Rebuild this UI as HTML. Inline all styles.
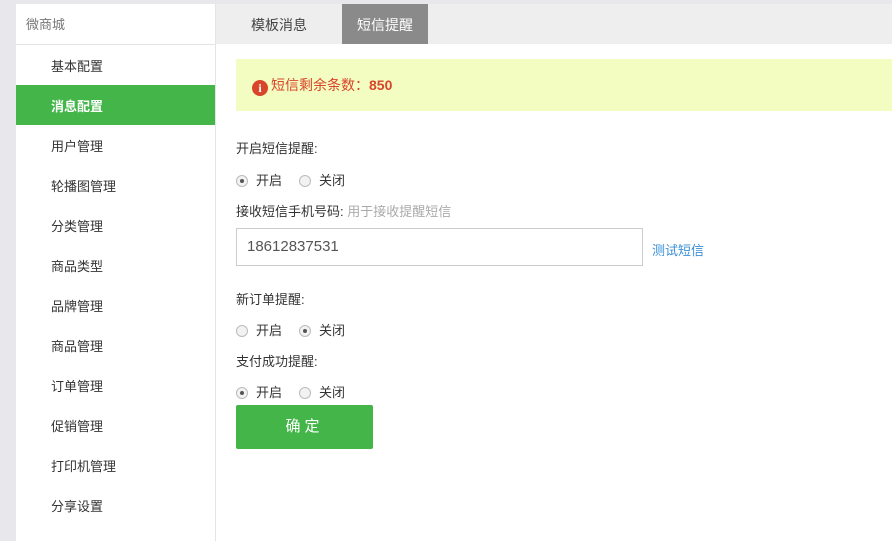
<!DOCTYPE html><html><head><meta charset="utf-8"><style>
body{margin:0;width:892px;height:541px;background:#e8e8ec;font-family:"Liberation Sans","Noto Sans CJK SC",sans-serif;font-size:13px;color:#333;position:relative;overflow:hidden}
.side{position:absolute;left:16px;top:4px;width:199px;height:537px;background:#fff;border-right:1px solid #e4e4e4}
.side .hd{height:40px;line-height:42px;padding-left:10px;color:#777;border-bottom:1px solid #e4e4e4}
.side .it{height:40px;line-height:44px;padding-left:35px}
.side .on{background:#43b549;color:#fff;font-weight:bold}
.main{position:absolute;left:216px;top:4px;right:0;bottom:0;background:#fff}
.tabs{height:40px;background:#eeeeee;position:relative}
.tab{position:absolute;top:0;height:40px;line-height:42px;font-size:14px}
.alert{position:absolute;left:20px;top:55px;right:0;height:52px;background:#f3fdc2;color:#d8452a;font-size:14px;line-height:52px;padding-left:16px}
.ico{display:inline-block;width:16px;height:16px;border-radius:50%;background:#d8452a;color:#fff;font-weight:bold;font-size:12px;line-height:16px;text-align:center;vertical-align:-2px;margin-right:3px;font-family:"Liberation Serif",serif}
.t{position:absolute;left:20px}
.r{display:inline-block;width:10px;height:10px;border:1px solid #bbb;border-radius:50%;background:#f2f2f2;vertical-align:-2px;margin-right:8px;position:relative}
.r.c::after{content:"";position:absolute;left:3px;top:3px;width:4px;height:4px;border-radius:50%;background:#555}
.r2{margin-left:17px}
.inp{position:absolute;left:20px;top:224px;width:395px;height:36px;border:1px solid #ccc;line-height:36px;padding-left:10px;font-size:15px;color:#555}
.btn{position:absolute;left:20px;top:401px;width:137px;height:44px;background:#43b549;color:#fff;font-size:15px;line-height:44px;text-align:center;letter-spacing:4px;border-radius:2px}
</style></head><body>
<div class="side"><div class="hd">微商城</div>
<div class="it">基本配置</div><div class="it on">消息配置</div><div class="it">用户管理</div><div class="it">轮播图管理</div><div class="it">分类管理</div><div class="it">商品类型</div><div class="it">品牌管理</div><div class="it">商品管理</div><div class="it">订单管理</div><div class="it">促销管理</div><div class="it">打印机管理</div><div class="it">分享设置</div></div>
<div class="main">
<div class="tabs"><div class="tab" style="left:35px;color:#444">模板消息</div><div class="tab" style="left:126px;width:86px;background:#8a8a8a;color:#fff;text-align:center">短信提醒</div></div>
<div class="alert"><span class="ico">i</span>短信剩余条数：<b>850</b></div>
<div class="t" style="top:134px">开启短信提醒:</div>
<div class="t" style="top:166px"><span class="r c"></span>开启<span class="r r2"></span>关闭</div>
<div class="t" style="top:197px">接收短信手机号码: <span style="color:#aaa">用于接收提醒短信</span></div>
<div class="inp">18612837531</div>
<div class="t" style="left:436px;top:236px;color:#3a8fd6">测试短信</div>
<div class="t" style="top:285px">新订单提醒:</div>
<div class="t" style="top:316px"><span class="r"></span>开启<span class="r r2 c"></span>关闭</div>
<div class="t" style="top:347px">支付成功提醒:</div>
<div class="t" style="top:378px"><span class="r c"></span>开启<span class="r r2"></span>关闭</div>
<div class="btn">确定</div>
</div>
</body></html>
